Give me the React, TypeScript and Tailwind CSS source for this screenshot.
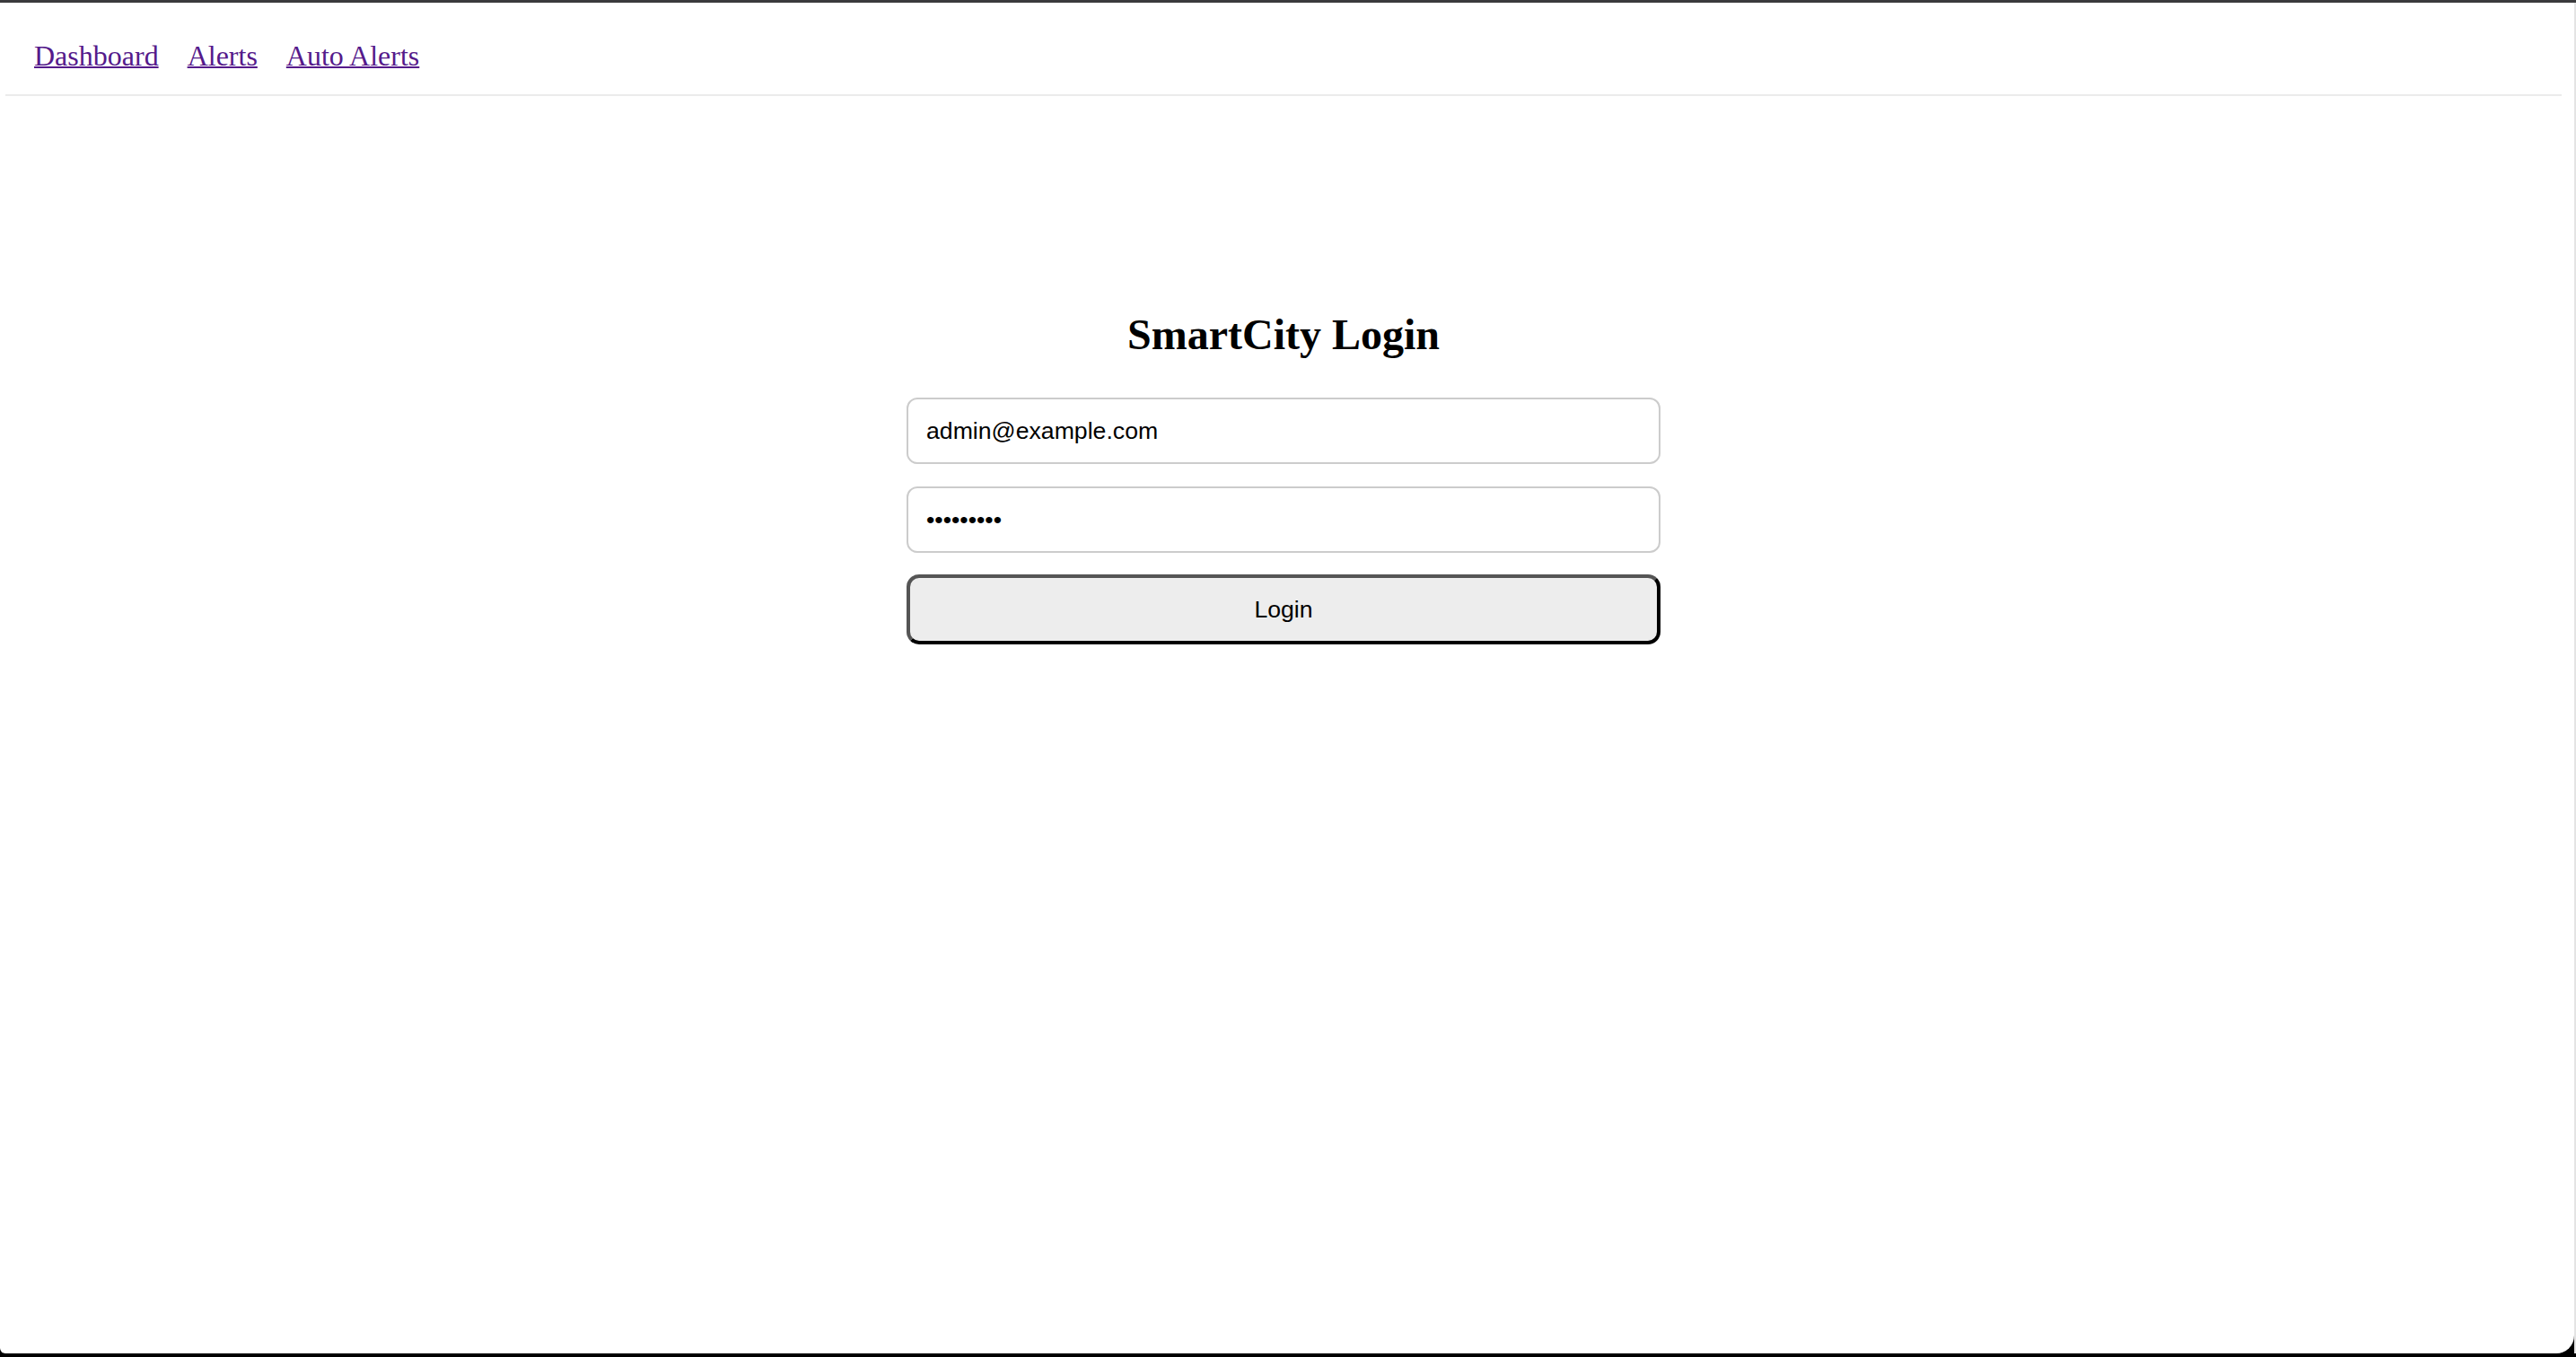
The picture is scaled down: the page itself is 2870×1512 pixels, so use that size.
import React from "react";

export default function App() {
  return (
    <div className="h-[1512px] w-full flex flex-col bg-black overflow-hidden">
      <div className="h-[3px] shrink-0 bg-[#3a3a3c]" />
      <div className="flex-1 flex min-h-0">
        <div className="flex-1 bg-white rounded-br-[20px] rounded-bl-[6px] pl-[6px] pr-[14px]">
          <nav className="flex gap-[32px] pl-[32px] pt-[41px] pb-[25px] border-b-2 border-[#ebebeb] font-['Liberation_Serif',serif] text-[32px] leading-[36px]">
            <a href="#" className="text-[#551a8b] underline decoration-2">Dashboard</a>
            <a href="#" className="text-[#551a8b] underline decoration-2">Alerts</a>
            <a href="#" className="text-[#551a8b] underline decoration-2">Auto Alerts</a>
          </nav>
          <main className="flex flex-col items-center pt-[238px]">
            <h2 className="font-['Liberation_Serif',serif] font-bold text-[48px] leading-[56px] text-black mb-[42px]">
              SmartCity Login
            </h2>
            <form className="w-[840px] flex flex-col" onSubmit={(e) => e.preventDefault()}>
              <input
                type="email"
                defaultValue="admin@example.com"
                className="h-[74px] w-full border-2 border-[#cccccc] rounded-[12px] px-[20px] bg-white text-black font-['Liberation_Sans',Arial,sans-serif] text-[26.67px] outline-none"
              />
              <input
                type="password"
                defaultValue="123456789"
                className="mt-[25px] h-[74px] w-full border-2 border-[#cccccc] rounded-[12px] px-[20px] bg-white text-black font-['Liberation_Sans',Arial,sans-serif] text-[26.67px] outline-none"
              />
              <button
                type="submit"
                className="mt-[24px] h-[78px] w-full rounded-[14px] border-[4px] border-t-[#555555] border-l-[#555555] border-b-black border-r-black bg-[#ededed] text-black font-['Liberation_Sans',Arial,sans-serif] text-[26.67px]"
              >
                Login
              </button>
            </form>
          </main>
        </div>
        <div className="w-[2px] shrink-0 bg-[#e4e4e4]" />
      </div>
      <div className="h-[4px] shrink-0 bg-black" />
    </div>
  );
}
